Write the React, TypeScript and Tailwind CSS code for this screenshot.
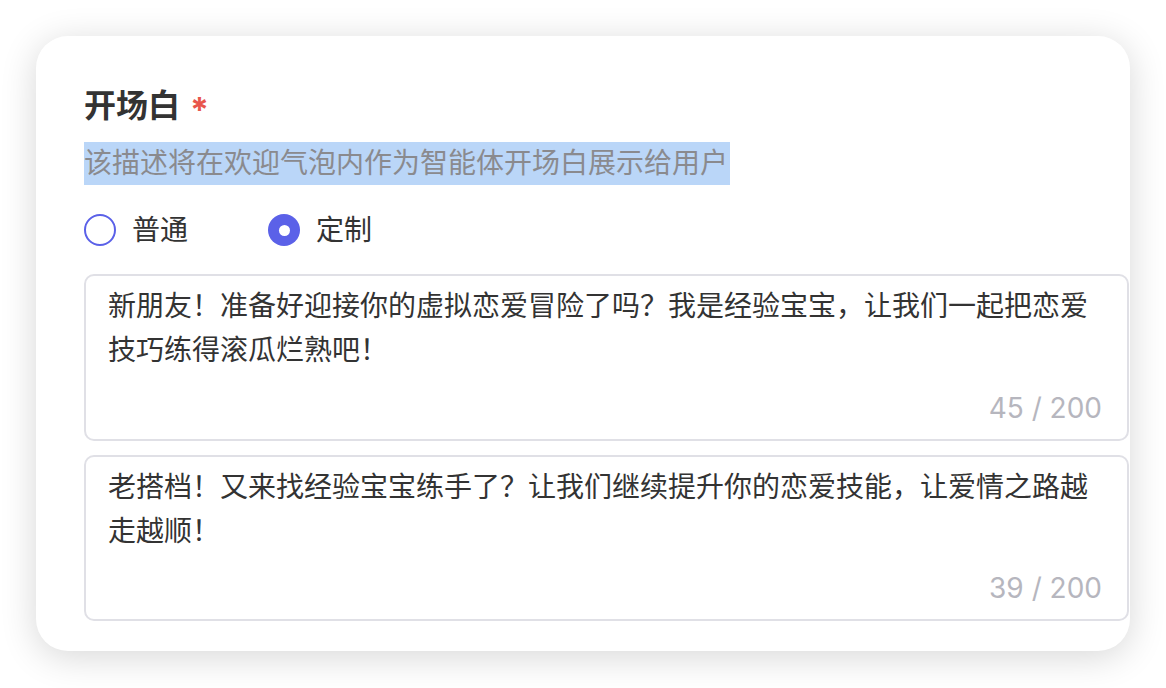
import React from 'react';

const cjk = { fontFamily: 'Inter, "Noto Sans CJK SC", sans-serif' };

const RadioOption: React.FC<{ label: string; checked?: boolean }> = ({ label, checked }) => (
    <label className="flex h-[44px] items-center gap-[16px]">
        {checked ? (
            <span className="flex h-[32px] w-[32px] items-center justify-center rounded-full bg-[#5b61e8]">
                <span className="h-[11px] w-[11px] rounded-full bg-white" />
            </span>
        ) : (
            <span className="h-[32px] w-[32px] rounded-full border-2 border-[#5b61e8] bg-white" />
        )}
        <span className="block h-[44px] text-[28px] leading-[44px] text-[#333333]">{label}</span>
    </label>
);

const GreetingBox: React.FC<{ text: string; count: number; height: string }> = ({ text, count, height }) => (
    <div className={`flex w-[1045px] shrink-0 flex-col overflow-hidden rounded-[10px] border-2 border-[#e0e0e6] bg-white pl-[22px] pr-[24px] pt-[8px] pb-[9px] ${height}`}>
        <p className="text-[28px] leading-[44px] text-[#333333]">{text}</p>
        <div className="mt-auto h-[44px] pr-[1px] text-right text-[28px] leading-[44px] text-[#b6b6be]">{count} / 200</div>
    </div>
);

export default function App() {
    return (
        <div className="min-h-[688px] bg-white pt-[36px] pl-[36px]" style={cjk}>
            <div className="w-[1094px] overflow-hidden rounded-[32px] bg-white pl-[48px] pt-[46px] pb-[30px] shadow-[0_6px_36px_rgba(0,0,0,0.16)]">
                <div className="flex h-[44px] items-center pt-[3px]">
                    <h2 className="h-[44px] text-[32px] font-semibold leading-[44px] text-[#333333]">开场白</h2>
                    <span className="ml-[10px] mt-[8px] h-[44px] text-[34px] font-bold leading-[44px] text-[#e8564c]">*</span>
                </div>
                <div className="mt-[16px] flex h-[43px]">
                    <span className="block h-[43px] bg-[#bad6f8] pr-[2px] text-[28px] leading-[43px] text-[#8a8a8e]">该描述将在欢迎气泡内作为智能体开场白展示给用户</span>
                </div>
                <div className="mt-[23px] flex items-center gap-[80px]">
                    <RadioOption label="普通" />
                    <RadioOption label="定制" checked />
                </div>
                <div className="mt-[22px] flex flex-col gap-[14px]">
                    <GreetingBox
                        text="新朋友！准备好迎接你的虚拟恋爱冒险了吗？我是经验宝宝，让我们一起把恋爱技巧练得滚瓜烂熟吧！"
                        count={45}
                        height="h-[167px]"
                    />
                    <GreetingBox
                        text="老搭档！又来找经验宝宝练手了？让我们继续提升你的恋爱技能，让爱情之路越走越顺！"
                        count={39}
                        height="h-[166px]"
                    />
                </div>
            </div>
        </div>
    );
}
